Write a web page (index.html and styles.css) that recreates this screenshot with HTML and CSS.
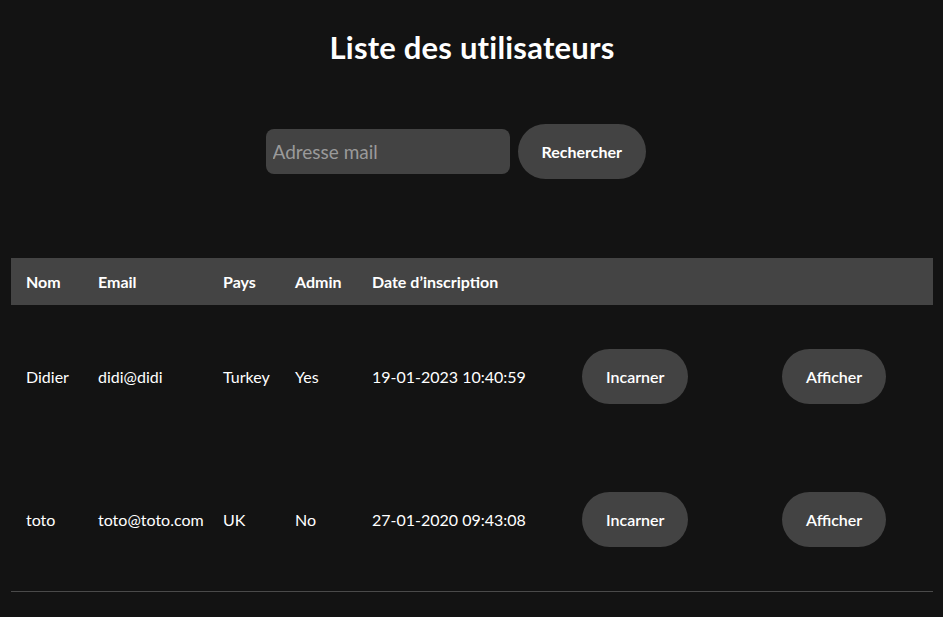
FILE: index.html
```html
<!DOCTYPE html>
<html lang="fr">
<head>
<meta charset="utf-8">
<title>Liste des utilisateurs</title>
<link rel="stylesheet" href="styles.css">
</head>
<body>
<main class="page">
  <h1 class="title">Liste des utilisateurs</h1>
  <form class="search">
    <input class="search-input" type="text" placeholder="Adresse mail">
    <button class="btn btn-search" type="button">Rechercher</button>
  </form>
  <table class="users">
    <colgroup>
      <col class="c-nom"><col class="c-email"><col class="c-pays"><col class="c-admin"><col class="c-date"><col class="c-inc"><col class="c-aff">
    </colgroup>
    <thead>
      <tr>
        <th>Nom</th><th>Email</th><th>Pays</th><th>Admin</th><th>Date d’inscription</th><th></th><th></th>
      </tr>
    </thead>
    <tbody>
      <tr>
        <td>Didier</td><td>didi@didi</td><td>Turkey</td><td>Yes</td><td>19-01-2023 10:40:59</td>
        <td><button class="btn" type="button">Incarner</button></td>
        <td><button class="btn" type="button">Afficher</button></td>
      </tr>
      <tr>
        <td>toto</td><td>toto@toto.com</td><td>UK</td><td>No</td><td>27-01-2020 09:43:08</td>
        <td><button class="btn" type="button">Incarner</button></td>
        <td><button class="btn" type="button">Afficher</button></td>
      </tr>
    </tbody>
  </table>
</main>
</body>
</html>
```
FILE: styles.css
```css
html, body {
  margin: 0;
  padding: 0;
  background: #131313;
  color: #ffffff;
  font-family: Lato, "Noto Sans", sans-serif;
}

.page {
  display: flex;
  flex-direction: column;
  align-items: center;
  padding: 0 10px 0 11px;
}

.title {
  margin: 28px 0 0;
  font-size: 31px;
  font-weight: 700;
  line-height: 38px;
  letter-spacing: 0.2px;
}

.search {
  display: flex;
  align-items: center;
  gap: 8px;
  margin: 58px 33px 0 0;
}

.search-input {
  box-sizing: border-box;
  width: 244px;
  height: 45px;
  border: none;
  border-radius: 8px;
  background: #434343;
  color: #fff;
  padding: 0 7px;
  font-family: inherit;
  font-size: 19px;
  outline: none;
}

.search-input::placeholder {
  color: #9a9a9a;
}

.btn {
  box-sizing: border-box;
  height: 55px;
  border: none;
  border-radius: 28px;
  background: #434343;
  color: #fff;
  font-family: inherit;
  font-size: 16px;
  font-weight: 600;
  padding: 0 24px;
  cursor: pointer;
}

.btn-search {
  width: 128px;
  font-weight: 700;
}

.users {
  margin-top: 79px;
  width: 922px;
  border-collapse: collapse;
  table-layout: fixed;
  font-size: 16px;
}

.c-nom { width: 72px; }
.c-email { width: 125px; }
.c-pays { width: 72px; }
.c-admin { width: 77px; }
.c-date { width: 210px; }
.c-inc { width: 200px; }
.c-aff { width: 166px; }

.users thead tr {
  background: #444444;
}

.users th {
  height: 47px;
  padding: 0 15px;
  text-align: left;
  font-weight: 700;
  box-sizing: border-box;
}

.users td {
  padding: 44px 15px;
  vertical-align: middle;
  white-space: nowrap;
}

.users tbody tr:last-child {
  border-bottom: 1px solid #4a4a4a;
}
```
